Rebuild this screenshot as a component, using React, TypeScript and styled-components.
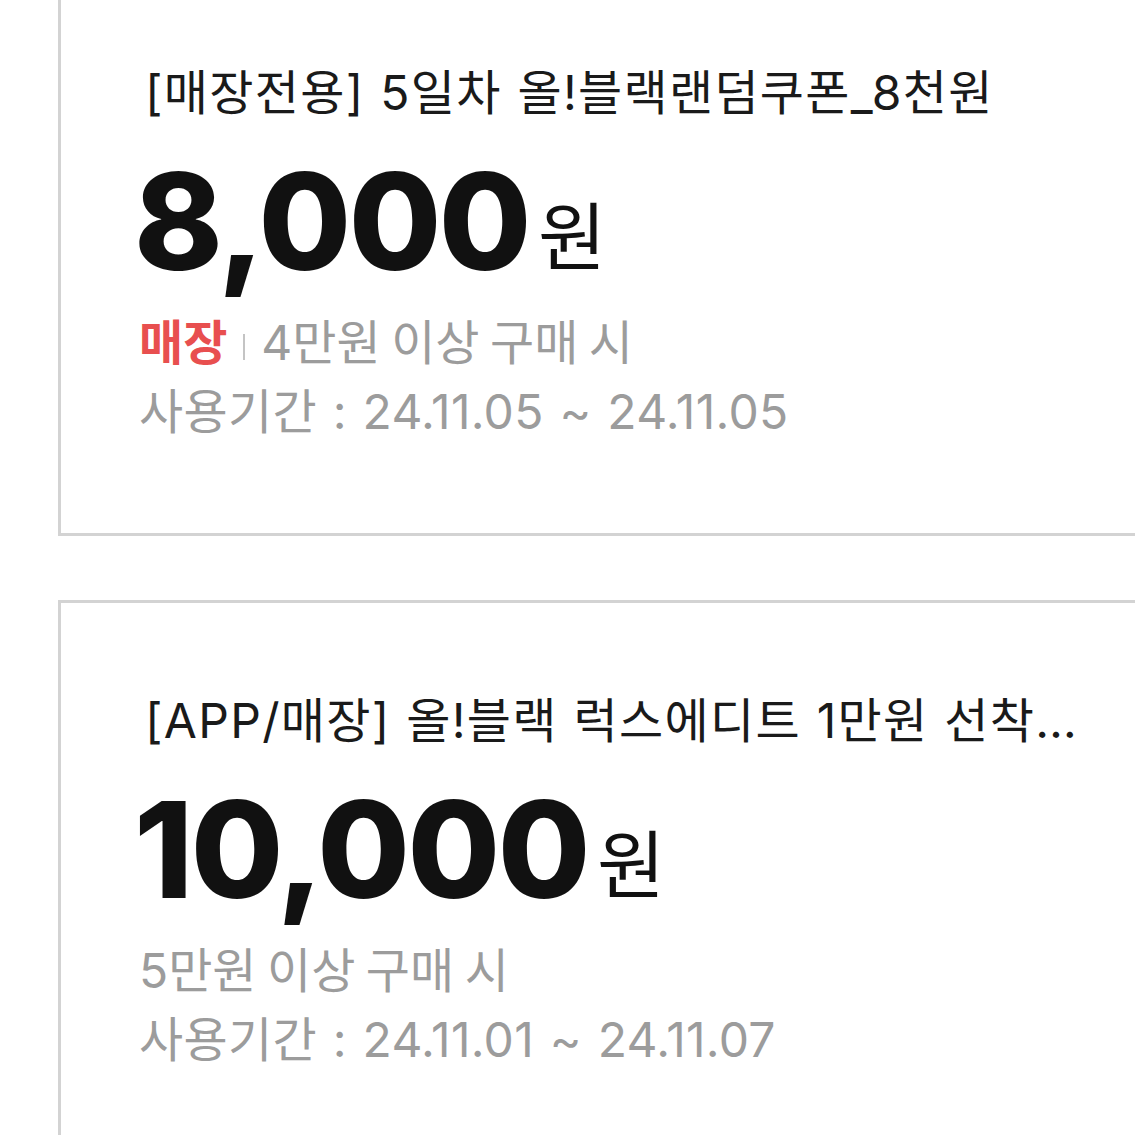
import React from "react";
import styled, { createGlobalStyle } from "styled-components";

const Global = createGlobalStyle`
  html, body {
    margin: 0;
    padding: 0;
    background: #ffffff;
    overflow: hidden;
  }
  body {
    font-family: Inter, "Noto Sans CJK KR", sans-serif;
    -webkit-font-smoothing: antialiased;
  }
`;

const Page = styled.div`
  width: 1135px;
  height: 1135px;
  overflow: hidden;
  background: #ffffff;
`;

const List = styled.div`
  display: flex;
  flex-direction: column;
  gap: 64px;
  margin-top: -28px;
  padding-left: 58px;
`;

const Card = styled.div`
  border: 3px solid #d3d3d3;
  border-right: none;
  padding: 88px 46px 88px 84px;
  display: flex;
  flex-direction: column;
  min-width: 0;
`;

const Title = styled.div`
  font-family: Inter, "Noto Sans CJK KR", sans-serif;
  font-size: 48px;
  line-height: 60px;
  color: #1a1a1a;
  letter-spacing: 1.3px;
  word-spacing: 1px;
  white-space: nowrap;
  overflow: hidden;
  text-overflow: ellipsis;
`;

const PriceRow = styled.div`
  display: flex;
  align-items: baseline;
  margin-top: 33px;
  margin-left: -11px;
  height: 134px;
`;

const Amount = styled.span`
  font-family: Inter, "Noto Sans", sans-serif;
  font-weight: 800;
  font-size: 134px;
  line-height: 130px;
  letter-spacing: -2.5px;
  color: #111111;
`;

const Won = styled.span`
  font-family: "Noto Sans CJK KR", sans-serif;
  font-size: 74px;
  line-height: 1;
  color: #111111;
  margin-left: 9px;
  transform: translateY(-6px);
`;

const Condition = styled.div`
  display: flex;
  align-items: center;
  font-family: Inter, "Noto Sans CJK KR", sans-serif;
  font-size: 48px;
  line-height: 66px;
  color: #9c9c9c;
  margin-top: 20px;
  margin-left: -6px;
  word-spacing: -3px;
`;

const Channel = styled.span`
  color: #e84f4f;
  font-weight: 700;
`;

const Divider = styled.span`
  display: inline-block;
  width: 2px;
  height: 26px;
  background: #c4c4c4;
  margin: 8px 16px 0 16px;
`;

const Period = styled.div`
  font-family: Inter, "Noto Sans CJK KR", sans-serif;
  font-size: 48px;
  line-height: 66px;
  color: #9c9c9c;
  margin-top: 3px;
  margin-left: -6px;
  letter-spacing: 0.3px;
  word-spacing: 2px;
`;

type Coupon = {
  title: string;
  amount: string;
  channel?: string;
  condition: string;
  period: string;
};

const coupons: Coupon[] = [
  {
    title: "[매장전용] 5일차 올!블랙랜덤쿠폰_8천원",
    amount: "8,000",
    channel: "매장",
    condition: "4만원 이상 구매 시",
    period: "사용기간 : 24.11.05 ~ 24.11.05",
  },
  {
    title: "[APP/매장] 올!블랙 럭스에디트 1만원 선착순 쿠폰",
    amount: "10,000",
    condition: "5만원 이상 구매 시",
    period: "사용기간 : 24.11.01 ~ 24.11.07",
  },
];

export default function App() {
  return (
    <Page>
      <Global />
      <List>
        {coupons.map((c) => (
          <Card key={c.title}>
            <Title>{c.title}</Title>
            <PriceRow>
              <Amount>{c.amount}</Amount>
              <Won>원</Won>
            </PriceRow>
            <Condition>
              {c.channel && (
                <>
                  <Channel>{c.channel}</Channel>
                  <Divider />
                </>
              )}
              <span>{c.condition}</span>
            </Condition>
            <Period>{c.period}</Period>
          </Card>
        ))}
      </List>
    </Page>
  );
}
